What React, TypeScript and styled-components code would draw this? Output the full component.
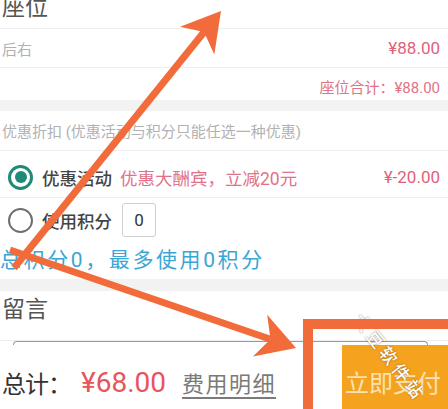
import React from "react";
import styled, { createGlobalStyle } from "styled-components";

const GlobalStyle = createGlobalStyle`
  html, body {
    margin: 0;
    padding: 0;
    background: #ffffff;
  }
  body {
    font-family: Roboto, "Noto Sans CJK SC", sans-serif;
  }
`;

const Screen = styled.div`
  position: relative;
  width: 448px;
  height: 409px;
  overflow: hidden;
  background: #ffffff;
`;

const SectionTitle = styled.div<{ $height: number; $offset?: number }>`
  box-sizing: border-box;
  height: ${(p) => p.$height}px;
  padding: ${(p) => p.$offset || 0}px 0 0 2px;
  font-size: 23px;
  line-height: ${(p) => p.$height - 2 * (p.$offset || 0) - 13}px;
  color: #555555;
  border-bottom: 1px solid #eeeeee;
`;

const Row = styled.div<{ $height: number; $shift?: number; $border?: boolean }>`
  box-sizing: border-box;
  height: ${(p) => p.$height}px;
  display: flex;
  align-items: center;
  padding: ${(p) => p.$shift || 0}px 8px 0 2px;
  border-bottom: ${(p) => (p.$border ? "1px solid #eeeeee" : "none")};
`;

const Muted = styled.span`
  font-size: 15px;
  color: #b2b2b2;
`;

const Price = styled.span`
  margin-left: auto;
  font-size: 17px;
  color: #e0627a;
`;

const Subtotal = styled.span`
  margin-left: auto;
  font-size: 15px;
  color: #e07486;
`;

const Band = styled.div<{ $height: number }>`
  height: ${(p) => p.$height}px;
  background: #f2f2f2;
`;

const Radio = styled.span<{ $checked?: boolean }>`
  position: relative;
  box-sizing: border-box;
  flex: none;
  width: 25px;
  height: 25px;
  margin: 0 9px 0 6px;
  border-radius: 50%;
  border: ${(p) => (p.$checked ? "3px solid #1f8a78" : "2px solid #6f6f6f")};
  &::after {
    content: "";
    display: ${(p) => (p.$checked ? "block" : "none")};
    position: absolute;
    left: 50%;
    top: 50%;
    width: 12px;
    height: 12px;
    margin: -6px 0 0 -6px;
    border-radius: 50%;
    background: #1f8a78;
  }
`;

const OptionLabel = styled.span`
  font-size: 17.5px;
  font-weight: 500;
  color: #444444;
`;

const Promo = styled.span`
  margin-left: 8px;
  font-size: 17.5px;
  color: #e0728a;
`;

const PointsInput = styled.span`
  box-sizing: border-box;
  width: 34px;
  height: 34px;
  margin-left: 10px;
  display: flex;
  align-items: center;
  justify-content: center;
  border: 1px solid #cfcfcf;
  border-radius: 3px;
  font-size: 17px;
  color: #333333;
`;

const PointsNote = styled.div`
  box-sizing: border-box;
  height: 37px;
  padding: 0 0 5px 0;
  display: flex;
  align-items: center;
  font-size: 21px;
  letter-spacing: 2.6px;
  color: #3aa6d4;
`;

const MessageBox = styled.div`
  box-sizing: border-box;
  height: 4px;
  margin: 0 20px 0 13px;
  border: 1.5px solid #9a9a9a;
  border-bottom: none;
  border-radius: 8px 8px 0 0;
`;

const BottomBar = styled.div`
  height: 64px;
  display: flex;
  align-items: stretch;
`;

const TotalGroup = styled.div`
  display: flex;
  align-items: center;
  padding: 10px 0 0 2px;
`;

const TotalLabel = styled.span`
  font-size: 24px;
  letter-spacing: -1px;
  color: #333333;
`;

const TotalAmount = styled.span`
  margin-left: 10px;
  font-size: 28px;
  color: #e8545e;
`;

const DetailLink = styled.span`
  margin-left: 16px;
  font-size: 22px;
  letter-spacing: 1.5px;
  color: #7a7a7a;
  text-decoration: underline;
  text-underline-offset: 5px;
`;

const PayButton = styled.div`
  flex: 0 0 110px;
  margin: 0 -7px 0 auto;
  padding: 8px 0 0 3px;
  display: flex;
  align-items: center;
  background: #f5a21f;
  font-size: 24px;
  color: #fbe2b4;
`;

const Overlay = styled.svg`
  position: absolute;
  left: 0;
  top: 0;
  width: 448px;
  height: 409px;
  pointer-events: none;
`;

const Watermark = styled.span`
  position: absolute;
  left: 338px;
  top: 344px;
  font-size: 17px;
  font-weight: 500;
  color: #ffffff;
  letter-spacing: 4px;
  transform: rotate(52deg);
  text-shadow: 0 0 2px rgba(90, 60, 30, 0.7);
  white-space: nowrap;
`;

const ARROW = "#f26b3a";

// arrowhead polygon: tip, wing, notch, wing
const head = (tx: number, ty: number, fx: number, fy: number) => {
  const len = Math.hypot(tx - fx, ty - fy);
  const ux = (tx - fx) / len;
  const uy = (ty - fy) / len;
  const px = -uy;
  const py = ux;
  const back = 38;
  const wide = 22;
  const notch = 27;
  const pts = [
    [tx, ty],
    [tx - ux * back + px * wide, ty - uy * back + py * wide],
    [tx - ux * notch, ty - uy * notch],
    [tx - ux * back - px * wide, ty - uy * back - py * wide],
  ];
  return {
    points: pts.map((p) => p.join(",")).join(" "),
    nx: tx - ux * notch,
    ny: ty - uy * notch,
  };
};

const Arrow: React.FC<{ from: [number, number]; to: [number, number] }> = ({ from, to }) => {
  const h = head(to[0], to[1], from[0], from[1]);
  return (
    <g>
      <line x1={from[0]} y1={from[1]} x2={h.nx} y2={h.ny} stroke={ARROW} strokeWidth={7} />
      <polygon points={h.points} fill={ARROW} />
    </g>
  );
};

const App: React.FC = () => {
  return (
    <Screen>
      <GlobalStyle />
      <SectionTitle $height={29}>座位</SectionTitle>
      <Row $height={39} $border>
        <Muted>后右</Muted>
        <Price>¥88.00</Price>
      </Row>
      <Row $height={32} $shift={5}>
        <Subtotal>座位合计：¥88.00</Subtotal>
      </Row>
      <Band $height={11} />
      <Row $height={40} $border>
        <Muted>优惠折扣 (优惠活动与积分只能任选一种优惠)</Muted>
      </Row>
      <Row $height={47} $shift={6} $border>
        <Radio $checked />
        <OptionLabel>优惠活动</OptionLabel>
        <Promo>优惠大酬宾，立减20元</Promo>
        <Price>¥-20.00</Price>
      </Row>
      <Row $height={44}>
        <Radio />
        <OptionLabel>使用积分</OptionLabel>
        <PointsInput>0</PointsInput>
      </Row>
      <PointsNote>总积分0，最多使用0积分</PointsNote>
      <Band $height={12} />
      <SectionTitle $height={50} $offset={4}>
        留言
      </SectionTitle>
      <MessageBox />
      <BottomBar>
        <TotalGroup>
          <TotalLabel>总计：</TotalLabel>
          <TotalAmount>¥68.00</TotalAmount>
          <DetailLink>费用明细</DetailLink>
        </TotalGroup>
        <PayButton>立即支付</PayButton>
      </BottomBar>

      <Watermark>大豆软件站</Watermark>
      <Overlay viewBox="0 0 448 409">
        <rect x={308} y={324} width={150} height={100} fill="none" stroke={ARROW} strokeWidth={10} />
        <Arrow from={[14, 268]} to={[221, 11]} />
        <Arrow from={[10, 250]} to={[296, 348]} />
      </Overlay>
    </Screen>
  );
};

export default App;
